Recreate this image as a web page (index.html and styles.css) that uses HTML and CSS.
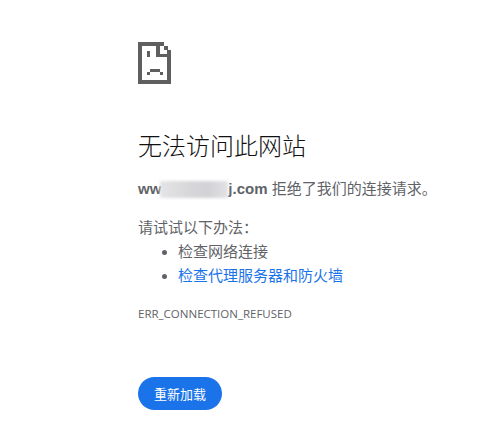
FILE: index.html
```html
<!DOCTYPE html>
<html lang="zh-CN">
<head>
  <meta charset="UTF-8">
  <title>无法访问此网站</title>
  <link rel="stylesheet" href="styles.css">
</head>
<body>
  <div class="container">
    <svg class="icon" width="33" height="42" viewBox="0 0 33 42" shape-rendering="crispEdges" fill="#5f5f5f">
      <rect width="4" height="42"/>
      <rect width="26" height="4"/>
      <rect y="38" width="33" height="4"/>
      <rect x="29" y="8" width="4" height="34"/>
      <rect x="18" width="4" height="15"/>
      <rect x="18" y="12" width="15" height="3"/>
      <rect x="26" y="4" width="4" height="4"/>
      <rect x="9" y="9" width="3" height="6"/>
      <rect x="12" y="27" width="10" height="3"/>
      <rect x="9" y="30" width="3" height="3"/>
      <rect x="22" y="30" width="3" height="3"/>
    </svg>
    <h1>无法访问此网站</h1>
    <p class="summary"><span class="host">ww<span class="blur"></span>j.com</span> 拒绝了我们的连接请求。</p>
    <p class="try">请试试以下办法：</p>
    <ul>
      <li>检查网络连接</li>
      <li><a href="#">检查代理服务器和防火墙</a></li>
    </ul>
    <div class="code">ERR_CONNECTION_REFUSED</div>
    <button>重新加载</button>
  </div>
</body>
</html>
```

FILE: styles.css
```css
body {
  margin: 0;
  background-color: #fff;
  color: #5f6368;
  font-family: "Liberation Sans", "Noto Sans CJK SC", sans-serif;
  font-size: 15px;
}
.container {
  padding: 42px 0 0 138px;
}
.icon {
  display: block;
}
h1 {
  margin: 47px 0 0;
  color: #111;
  font-size: 24px;
  font-weight: 300;
  line-height: 32px;
}
.summary {
  margin: 14px 0 0;
  font-size: 15px;
  line-height: 24px;
}
.host {
  font-weight: bold;
}
.blur {
  display: inline-block;
  width: 68px;
  height: 17px;
  margin: 0 0 -4px -1px;
  background: linear-gradient(90deg, #e4e4e6, #d8d8da 40%, #d2d2d6 70%, #e2e2e4);
  filter: blur(1.5px);
}
.try {
  margin: 15px 0 0;
  font-size: 15px;
  line-height: 24px;
}
ul {
  margin: 0;
  padding-left: 40px;
  font-size: 15px;
  line-height: 24px;
}
a {
  color: #1a73e8;
  text-decoration: none;
}
.code {
  margin-top: 18px;
  font-family: "Open Sans", sans-serif;
  font-size: 11.5px;
  line-height: 16px;
}
button {
  display: block;
  margin-top: 55px;
  width: 84px;
  height: 33px;
  padding: 0;
  border: none;
  border-radius: 17px;
  background-color: #1a73e8;
  color: #fff;
  font-family: inherit;
  font-size: 13px;
}
```
